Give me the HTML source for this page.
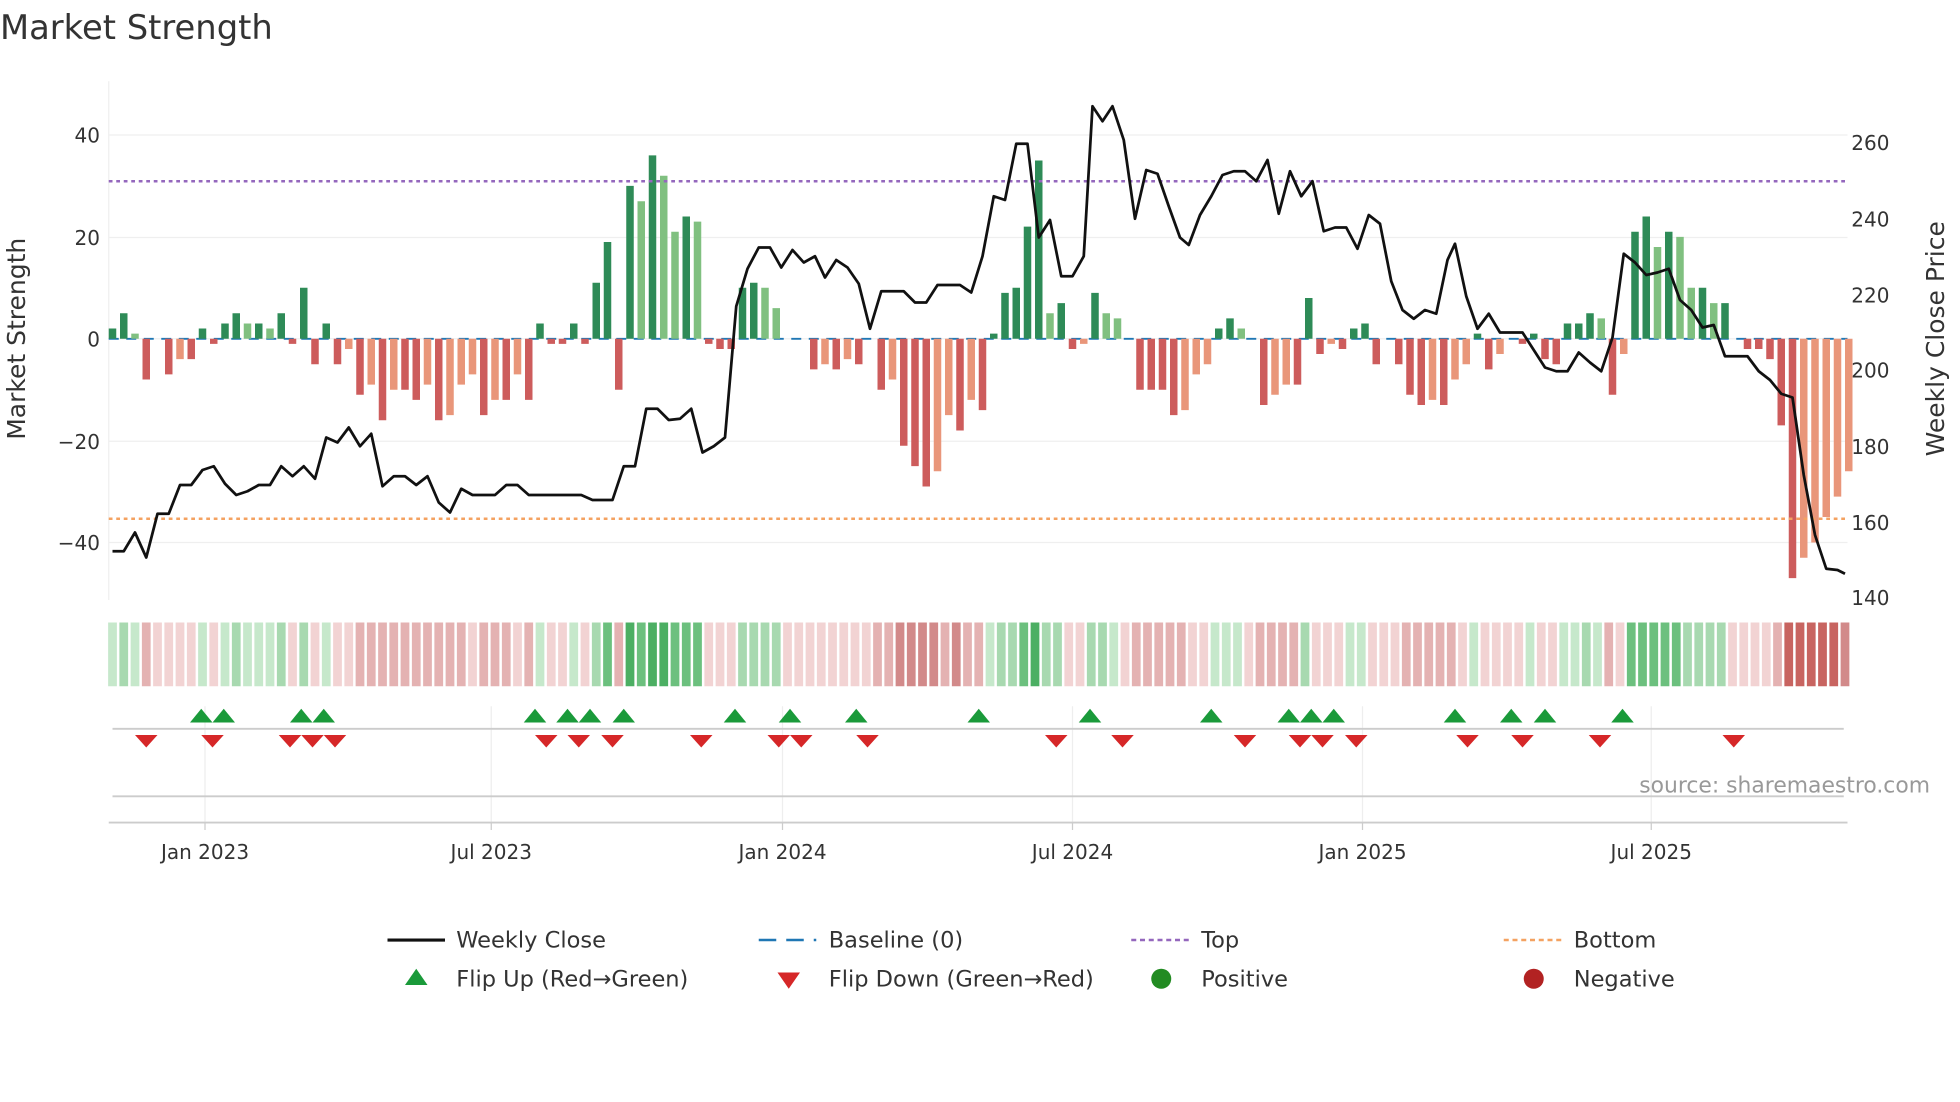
<!DOCTYPE html>
<html><head><meta charset="utf-8"><style>
html,body{margin:0;padding:0;background:#fff;}
svg{display:block;font-family:"DejaVu Sans","Liberation Sans",sans-serif;}
.a{fill:#2e8b57}.b{fill:#80c080}.c{fill:#cd5c5c}.d{fill:#e9967a}
.A{fill:#4caf63}.B{fill:#6cc07e}.C{fill:#a8d9b0}.D{fill:#c6e8cb}.E{fill:#f2d3d3}.F{fill:#e4b2b2}.G{fill:#d28a8a}.H{fill:#c86460}
.u{fill:#1a9a3a}.n{fill:#d62728}
</style></head><body>
<svg width="1960" height="1102" viewBox="0 0 1568 881.6" xmlns="http://www.w3.org/2000/svg">
<rect width="1568" height="882" fill="#fff"/>
<text x="0" y="31" font-size="27" fill="#333">Market Strength</text>
<g stroke="#efefef" stroke-width="1">
<line x1="87" x2="1478" y1="108" y2="108"/><line x1="87" x2="1478" y1="190" y2="190"/>
<line x1="87" x2="1478" y1="271" y2="271"/><line x1="87" x2="1478" y1="353" y2="353"/>
<line x1="87" x2="1478" y1="434" y2="434"/>
<line x1="87" x2="87" y1="65" y2="480"/>
</g>
<g font-size="16" fill="#333" text-anchor="end">
<text x="80" y="114">40</text><text x="80" y="196">20</text><text x="80" y="277">0</text>
<text x="80" y="359">−20</text><text x="80" y="440">−40</text>
</g>
<g font-size="16" fill="#333">
<text x="1481" y="120">260</text><text x="1481" y="181">240</text><text x="1481" y="242">220</text>
<text x="1481" y="302">200</text><text x="1481" y="363">180</text><text x="1481" y="424">160</text>
<text x="1481" y="484">140</text>
</g>
<text transform="translate(20,271) rotate(-90)" text-anchor="middle" font-size="20" fill="#333">Market Strength</text>
<text transform="translate(1555,271) rotate(-90)" text-anchor="middle" font-size="20" fill="#333">Weekly Close Price</text>
<line x1="87" x2="1478" y1="271" y2="271" stroke="#1f77b4" stroke-width="1.5" stroke-dasharray="8,6"/>
<g>
<rect x="87" y="262.8" width="6" height="8.2" class="a"/>
<rect x="96" y="250.6" width="6" height="20.4" class="a"/>
<rect x="105" y="266.9" width="6" height="4.1" class="b"/>
<rect x="114" y="271" width="6" height="32.6" class="c"/>
<rect x="132" y="271" width="6" height="28.5" class="c"/>
<rect x="141" y="271" width="6" height="16.3" class="d"/>
<rect x="150" y="271" width="6" height="16.3" class="c"/>
<rect x="159" y="262.8" width="6" height="8.2" class="a"/>
<rect x="168" y="271" width="6" height="4.1" class="c"/>
<rect x="177" y="258.8" width="6" height="12.2" class="a"/>
<rect x="186" y="250.6" width="6" height="20.4" class="a"/>
<rect x="195" y="258.8" width="6" height="12.2" class="b"/>
<rect x="204" y="258.8" width="6" height="12.2" class="a"/>
<rect x="213" y="262.8" width="6" height="8.2" class="b"/>
<rect x="222" y="250.6" width="6" height="20.4" class="a"/>
<rect x="231" y="271" width="6" height="4.1" class="c"/>
<rect x="240" y="230.2" width="6" height="40.8" class="a"/>
<rect x="249" y="271" width="6" height="20.4" class="c"/>
<rect x="258" y="258.8" width="6" height="12.2" class="a"/>
<rect x="267" y="271" width="6" height="20.4" class="c"/>
<rect x="276" y="271" width="6" height="8.2" class="d"/>
<rect x="285" y="271" width="6" height="44.8" class="c"/>
<rect x="294" y="271" width="6" height="36.7" class="d"/>
<rect x="303" y="271" width="6" height="65.2" class="c"/>
<rect x="312" y="271" width="6" height="40.8" class="d"/>
<rect x="321" y="271" width="6" height="40.8" class="c"/>
<rect x="330" y="271" width="6" height="48.9" class="c"/>
<rect x="339" y="271" width="6" height="36.7" class="d"/>
<rect x="348" y="271" width="6" height="65.2" class="c"/>
<rect x="357" y="271" width="6" height="61.1" class="d"/>
<rect x="366" y="271" width="6" height="36.7" class="d"/>
<rect x="375" y="271" width="6" height="28.5" class="d"/>
<rect x="384" y="271" width="6" height="61.1" class="c"/>
<rect x="393" y="271" width="6" height="48.9" class="d"/>
<rect x="402" y="271" width="6" height="48.9" class="c"/>
<rect x="411" y="271" width="6" height="28.5" class="d"/>
<rect x="420" y="271" width="6" height="48.9" class="c"/>
<rect x="429" y="258.8" width="6" height="12.2" class="a"/>
<rect x="438" y="271" width="6" height="4.1" class="c"/>
<rect x="447" y="271" width="6" height="4.1" class="c"/>
<rect x="456" y="258.8" width="6" height="12.2" class="a"/>
<rect x="465" y="271" width="6" height="4.1" class="c"/>
<rect x="474" y="226.2" width="6" height="44.8" class="a"/>
<rect x="483" y="193.6" width="6" height="77.4" class="a"/>
<rect x="492" y="271" width="6" height="40.8" class="c"/>
<rect x="501" y="148.7" width="6" height="122.3" class="a"/>
<rect x="510" y="161" width="6" height="110" class="b"/>
<rect x="519" y="124.3" width="6" height="146.7" class="a"/>
<rect x="528" y="140.6" width="6" height="130.4" class="b"/>
<rect x="537" y="185.4" width="6" height="85.6" class="b"/>
<rect x="546" y="173.2" width="6" height="97.8" class="a"/>
<rect x="555" y="177.3" width="6" height="93.7" class="b"/>
<rect x="564" y="271" width="6" height="4.1" class="c"/>
<rect x="573" y="271" width="6" height="8.2" class="c"/>
<rect x="582" y="271" width="6" height="8.2" class="c"/>
<rect x="591" y="230.2" width="6" height="40.8" class="a"/>
<rect x="600" y="226.2" width="6" height="44.8" class="a"/>
<rect x="609" y="230.2" width="6" height="40.8" class="b"/>
<rect x="618" y="246.5" width="6" height="24.5" class="b"/>
<rect x="648" y="271" width="6" height="24.5" class="c"/>
<rect x="657" y="271" width="6" height="20.4" class="d"/>
<rect x="666" y="271" width="6" height="24.5" class="c"/>
<rect x="675" y="271" width="6" height="16.3" class="d"/>
<rect x="684" y="271" width="6" height="20.4" class="c"/>
<rect x="702" y="271" width="6" height="40.8" class="c"/>
<rect x="711" y="271" width="6" height="32.6" class="d"/>
<rect x="720" y="271" width="6" height="85.6" class="c"/>
<rect x="729" y="271" width="6" height="101.9" class="c"/>
<rect x="738" y="271" width="6" height="118.2" class="c"/>
<rect x="747" y="271" width="6" height="106" class="d"/>
<rect x="756" y="271" width="6" height="61.1" class="d"/>
<rect x="765" y="271" width="6" height="73.4" class="c"/>
<rect x="774" y="271" width="6" height="48.9" class="d"/>
<rect x="783" y="271" width="6" height="57.1" class="c"/>
<rect x="792" y="266.9" width="6" height="4.1" class="a"/>
<rect x="801" y="234.3" width="6" height="36.7" class="a"/>
<rect x="810" y="230.2" width="6" height="40.8" class="a"/>
<rect x="819" y="181.3" width="6" height="89.7" class="a"/>
<rect x="828" y="128.4" width="6" height="142.6" class="a"/>
<rect x="837" y="250.6" width="6" height="20.4" class="b"/>
<rect x="846" y="242.5" width="6" height="28.5" class="a"/>
<rect x="855" y="271" width="6" height="8.2" class="c"/>
<rect x="864" y="271" width="6" height="4.1" class="d"/>
<rect x="873" y="234.3" width="6" height="36.7" class="a"/>
<rect x="882" y="250.6" width="6" height="20.4" class="b"/>
<rect x="891" y="254.7" width="6" height="16.3" class="b"/>
<rect x="909" y="271" width="6" height="40.8" class="c"/>
<rect x="918" y="271" width="6" height="40.8" class="c"/>
<rect x="927" y="271" width="6" height="40.8" class="c"/>
<rect x="936" y="271" width="6" height="61.1" class="c"/>
<rect x="945" y="271" width="6" height="57.1" class="d"/>
<rect x="954" y="271" width="6" height="28.5" class="d"/>
<rect x="963" y="271" width="6" height="20.4" class="d"/>
<rect x="972" y="262.8" width="6" height="8.2" class="a"/>
<rect x="981" y="254.7" width="6" height="16.3" class="a"/>
<rect x="990" y="262.8" width="6" height="8.2" class="b"/>
<rect x="1008" y="271" width="6" height="53" class="c"/>
<rect x="1017" y="271" width="6" height="44.8" class="d"/>
<rect x="1026" y="271" width="6" height="36.7" class="d"/>
<rect x="1035" y="271" width="6" height="36.7" class="c"/>
<rect x="1044" y="238.4" width="6" height="32.6" class="a"/>
<rect x="1053" y="271" width="6" height="12.2" class="c"/>
<rect x="1062" y="271" width="6" height="4.1" class="d"/>
<rect x="1071" y="271" width="6" height="8.2" class="c"/>
<rect x="1080" y="262.8" width="6" height="8.2" class="a"/>
<rect x="1089" y="258.8" width="6" height="12.2" class="a"/>
<rect x="1098" y="271" width="6" height="20.4" class="c"/>
<rect x="1116" y="271" width="6" height="20.4" class="c"/>
<rect x="1125" y="271" width="6" height="44.8" class="c"/>
<rect x="1134" y="271" width="6" height="53" class="c"/>
<rect x="1143" y="271" width="6" height="48.9" class="d"/>
<rect x="1152" y="271" width="6" height="53" class="c"/>
<rect x="1161" y="271" width="6" height="32.6" class="d"/>
<rect x="1170" y="271" width="6" height="20.4" class="d"/>
<rect x="1179" y="266.9" width="6" height="4.1" class="a"/>
<rect x="1188" y="271" width="6" height="24.5" class="c"/>
<rect x="1197" y="271" width="6" height="12.2" class="d"/>
<rect x="1215" y="271" width="6" height="4.1" class="c"/>
<rect x="1224" y="266.9" width="6" height="4.1" class="a"/>
<rect x="1233" y="271" width="6" height="16.3" class="c"/>
<rect x="1242" y="271" width="6" height="20.4" class="c"/>
<rect x="1251" y="258.8" width="6" height="12.2" class="a"/>
<rect x="1260" y="258.8" width="6" height="12.2" class="a"/>
<rect x="1269" y="250.6" width="6" height="20.4" class="a"/>
<rect x="1278" y="254.7" width="6" height="16.3" class="b"/>
<rect x="1287" y="271" width="6" height="44.8" class="c"/>
<rect x="1296" y="271" width="6" height="12.2" class="d"/>
<rect x="1305" y="185.4" width="6" height="85.6" class="a"/>
<rect x="1314" y="173.2" width="6" height="97.8" class="a"/>
<rect x="1323" y="197.6" width="6" height="73.4" class="b"/>
<rect x="1332" y="185.4" width="6" height="85.6" class="a"/>
<rect x="1341" y="189.5" width="6" height="81.5" class="b"/>
<rect x="1350" y="230.2" width="6" height="40.8" class="b"/>
<rect x="1359" y="230.2" width="6" height="40.8" class="a"/>
<rect x="1368" y="242.5" width="6" height="28.5" class="b"/>
<rect x="1377" y="242.5" width="6" height="28.5" class="a"/>
<rect x="1395" y="271" width="6" height="8.2" class="c"/>
<rect x="1404" y="271" width="6" height="8.2" class="c"/>
<rect x="1413" y="271" width="6" height="16.3" class="c"/>
<rect x="1422" y="271" width="6" height="69.3" class="c"/>
<rect x="1431" y="271" width="6" height="191.5" class="c"/>
<rect x="1440" y="271" width="6" height="175.2" class="d"/>
<rect x="1449" y="271" width="6" height="163" class="d"/>
<rect x="1458" y="271" width="6" height="142.6" class="d"/>
<rect x="1467" y="271" width="6" height="126.3" class="d"/>
<rect x="1476" y="271" width="6" height="106" class="d"/>
</g>
<line x1="87" x2="1478" y1="145" y2="145" stroke="#9467bd" stroke-width="2" stroke-dasharray="3,3"/>
<line x1="87" x2="1478" y1="415" y2="415" stroke="#f4a261" stroke-width="2" stroke-dasharray="3,3"/>
<polyline fill="none" stroke="#111" stroke-width="2.2" stroke-linejoin="round" points="90,441 99,441 108,426 117,446 126,411 135,411 144,388 153,388 162,376 171,373 180,387 189,396 198,393 207,388 216,388 225,373 234,381 243,373 252,383 261,350 270,354 279,342 288,357 297,347 306,389 315,381 324,381 333,388 342,381 351,402 360,410 369,391 378,396 396,396 405,388 414,388 423,396 465,396 474,400 490,400 499,373 508,373 517,327 526,327 535,336 544,335 553,327 562,362 571,357 580,350 589,245 598,215 607,198 616,198 625,214 634,200 643,210 652,205 660,222 669,208 678,214 687,227 696,263 705,233 723,233 732,242 741,242 750,228 768,228 777,234 786,205 795,157 804,160 813,115 822,115 831,190 840,176 849,221 858,221 867,205 874,85 882,97 890,85 899,112 908,175 917,136 926,139 935,165 944,190 951,196 960,172 969,157 978,140 987,137 996,137 1005,145 1014,128 1023,171 1032,137 1041,157 1050,145 1059,185 1068,182 1077,182 1086,199 1095,172 1104,179 1113,225 1122,248 1131,255 1140,248 1149,251 1158,208 1164,195 1173,237 1182,263 1191,251 1200,266 1218,266 1227,280 1236,294 1245,297 1254,297 1263,282 1272,290 1281,297 1290,270 1299,203 1308,210 1317,220 1326,218 1335,215 1344,240 1353,248 1362,262 1371,260 1380,285 1398,285 1407,297 1416,304 1425,315 1434,318 1443,380 1452,428 1461,455 1470,456 1476,459"/>
<g transform="translate(-0.5,0)">
<rect x="87" y="498" width="7" height="51" class="D"/><rect x="96" y="498" width="7" height="51" class="C"/><rect x="105" y="498" width="7" height="51" class="D"/><rect x="114" y="498" width="7" height="51" class="F"/><rect x="123" y="498" width="7" height="51" class="E"/><rect x="132" y="498" width="7" height="51" class="E"/><rect x="141" y="498" width="7" height="51" class="E"/><rect x="150" y="498" width="7" height="51" class="E"/><rect x="159" y="498" width="7" height="51" class="D"/><rect x="168" y="498" width="7" height="51" class="E"/>
<rect x="177" y="498" width="7" height="51" class="D"/><rect x="186" y="498" width="7" height="51" class="C"/><rect x="195" y="498" width="7" height="51" class="D"/><rect x="204" y="498" width="7" height="51" class="D"/><rect x="213" y="498" width="7" height="51" class="D"/><rect x="222" y="498" width="7" height="51" class="C"/><rect x="231" y="498" width="7" height="51" class="E"/><rect x="240" y="498" width="7" height="51" class="C"/><rect x="249" y="498" width="7" height="51" class="E"/><rect x="258" y="498" width="7" height="51" class="D"/>
<rect x="267" y="498" width="7" height="51" class="E"/><rect x="276" y="498" width="7" height="51" class="E"/><rect x="285" y="498" width="7" height="51" class="F"/><rect x="294" y="498" width="7" height="51" class="F"/><rect x="303" y="498" width="7" height="51" class="F"/><rect x="312" y="498" width="7" height="51" class="F"/><rect x="321" y="498" width="7" height="51" class="F"/><rect x="330" y="498" width="7" height="51" class="F"/><rect x="339" y="498" width="7" height="51" class="F"/><rect x="348" y="498" width="7" height="51" class="F"/>
<rect x="357" y="498" width="7" height="51" class="F"/><rect x="366" y="498" width="7" height="51" class="F"/><rect x="375" y="498" width="7" height="51" class="E"/><rect x="384" y="498" width="7" height="51" class="F"/><rect x="393" y="498" width="7" height="51" class="F"/><rect x="402" y="498" width="7" height="51" class="F"/><rect x="411" y="498" width="7" height="51" class="E"/><rect x="420" y="498" width="7" height="51" class="F"/><rect x="429" y="498" width="7" height="51" class="D"/><rect x="438" y="498" width="7" height="51" class="E"/>
<rect x="447" y="498" width="7" height="51" class="E"/><rect x="456" y="498" width="7" height="51" class="D"/><rect x="465" y="498" width="7" height="51" class="E"/><rect x="474" y="498" width="7" height="51" class="C"/><rect x="483" y="498" width="7" height="51" class="B"/><rect x="492" y="498" width="7" height="51" class="F"/><rect x="501" y="498" width="7" height="51" class="A"/><rect x="510" y="498" width="7" height="51" class="B"/><rect x="519" y="498" width="7" height="51" class="A"/><rect x="528" y="498" width="7" height="51" class="A"/>
<rect x="537" y="498" width="7" height="51" class="B"/><rect x="546" y="498" width="7" height="51" class="B"/><rect x="555" y="498" width="7" height="51" class="B"/><rect x="564" y="498" width="7" height="51" class="E"/><rect x="573" y="498" width="7" height="51" class="E"/><rect x="582" y="498" width="7" height="51" class="E"/><rect x="591" y="498" width="7" height="51" class="C"/><rect x="600" y="498" width="7" height="51" class="C"/><rect x="609" y="498" width="7" height="51" class="C"/><rect x="618" y="498" width="7" height="51" class="C"/>
<rect x="627" y="498" width="7" height="51" class="E"/><rect x="636" y="498" width="7" height="51" class="E"/><rect x="645" y="498" width="7" height="51" class="E"/><rect x="654" y="498" width="7" height="51" class="E"/><rect x="663" y="498" width="7" height="51" class="E"/><rect x="672" y="498" width="7" height="51" class="E"/><rect x="681" y="498" width="7" height="51" class="E"/><rect x="690" y="498" width="7" height="51" class="E"/><rect x="699" y="498" width="7" height="51" class="F"/><rect x="708" y="498" width="7" height="51" class="F"/>
<rect x="717" y="498" width="7" height="51" class="G"/><rect x="726" y="498" width="7" height="51" class="G"/><rect x="735" y="498" width="7" height="51" class="G"/><rect x="744" y="498" width="7" height="51" class="G"/><rect x="753" y="498" width="7" height="51" class="F"/><rect x="762" y="498" width="7" height="51" class="G"/><rect x="771" y="498" width="7" height="51" class="F"/><rect x="780" y="498" width="7" height="51" class="F"/><rect x="789" y="498" width="7" height="51" class="D"/><rect x="798" y="498" width="7" height="51" class="C"/>
<rect x="807" y="498" width="7" height="51" class="C"/><rect x="816" y="498" width="7" height="51" class="B"/><rect x="825" y="498" width="7" height="51" class="A"/><rect x="834" y="498" width="7" height="51" class="C"/><rect x="843" y="498" width="7" height="51" class="C"/><rect x="852" y="498" width="7" height="51" class="E"/><rect x="861" y="498" width="7" height="51" class="E"/><rect x="870" y="498" width="7" height="51" class="C"/><rect x="879" y="498" width="7" height="51" class="C"/><rect x="888" y="498" width="7" height="51" class="D"/>
<rect x="897" y="498" width="7" height="51" class="E"/><rect x="906" y="498" width="7" height="51" class="F"/><rect x="915" y="498" width="7" height="51" class="F"/><rect x="924" y="498" width="7" height="51" class="F"/><rect x="933" y="498" width="7" height="51" class="F"/><rect x="942" y="498" width="7" height="51" class="F"/><rect x="951" y="498" width="7" height="51" class="E"/><rect x="960" y="498" width="7" height="51" class="E"/><rect x="969" y="498" width="7" height="51" class="D"/><rect x="978" y="498" width="7" height="51" class="D"/>
<rect x="987" y="498" width="7" height="51" class="D"/><rect x="996" y="498" width="7" height="51" class="E"/><rect x="1005" y="498" width="7" height="51" class="F"/><rect x="1014" y="498" width="7" height="51" class="F"/><rect x="1023" y="498" width="7" height="51" class="F"/><rect x="1032" y="498" width="7" height="51" class="F"/><rect x="1041" y="498" width="7" height="51" class="C"/><rect x="1050" y="498" width="7" height="51" class="E"/><rect x="1059" y="498" width="7" height="51" class="E"/><rect x="1068" y="498" width="7" height="51" class="E"/>
<rect x="1077" y="498" width="7" height="51" class="D"/><rect x="1086" y="498" width="7" height="51" class="D"/><rect x="1095" y="498" width="7" height="51" class="E"/><rect x="1104" y="498" width="7" height="51" class="E"/><rect x="1113" y="498" width="7" height="51" class="E"/><rect x="1122" y="498" width="7" height="51" class="F"/><rect x="1131" y="498" width="7" height="51" class="F"/><rect x="1140" y="498" width="7" height="51" class="F"/><rect x="1149" y="498" width="7" height="51" class="F"/><rect x="1158" y="498" width="7" height="51" class="F"/>
<rect x="1167" y="498" width="7" height="51" class="E"/><rect x="1176" y="498" width="7" height="51" class="D"/><rect x="1185" y="498" width="7" height="51" class="E"/><rect x="1194" y="498" width="7" height="51" class="E"/><rect x="1203" y="498" width="7" height="51" class="E"/><rect x="1212" y="498" width="7" height="51" class="E"/><rect x="1221" y="498" width="7" height="51" class="D"/><rect x="1230" y="498" width="7" height="51" class="E"/><rect x="1239" y="498" width="7" height="51" class="E"/><rect x="1248" y="498" width="7" height="51" class="D"/>
<rect x="1257" y="498" width="7" height="51" class="D"/><rect x="1266" y="498" width="7" height="51" class="C"/><rect x="1275" y="498" width="7" height="51" class="D"/><rect x="1284" y="498" width="7" height="51" class="F"/><rect x="1293" y="498" width="7" height="51" class="E"/><rect x="1302" y="498" width="7" height="51" class="B"/><rect x="1311" y="498" width="7" height="51" class="B"/><rect x="1320" y="498" width="7" height="51" class="B"/><rect x="1329" y="498" width="7" height="51" class="B"/><rect x="1338" y="498" width="7" height="51" class="B"/>
<rect x="1347" y="498" width="7" height="51" class="C"/><rect x="1356" y="498" width="7" height="51" class="C"/><rect x="1365" y="498" width="7" height="51" class="C"/><rect x="1374" y="498" width="7" height="51" class="C"/><rect x="1383" y="498" width="7" height="51" class="E"/><rect x="1392" y="498" width="7" height="51" class="E"/><rect x="1401" y="498" width="7" height="51" class="E"/><rect x="1410" y="498" width="7" height="51" class="E"/><rect x="1419" y="498" width="7" height="51" class="F"/><rect x="1428" y="498" width="7" height="51" class="H"/>
<rect x="1437" y="498" width="7" height="51" class="H"/><rect x="1446" y="498" width="7" height="51" class="H"/><rect x="1455" y="498" width="7" height="51" class="H"/><rect x="1464" y="498" width="7" height="51" class="H"/><rect x="1473" y="498" width="7" height="51" class="G"/>
</g>
<g stroke="#eee"><line x1="164" x2="164" y1="565" y2="658"/><line x1="393" x2="393" y1="565" y2="658"/><line x1="626" x2="626" y1="565" y2="658"/><line x1="858" x2="858" y1="565" y2="658"/><line x1="1090" x2="1090" y1="565" y2="658"/><line x1="1321" x2="1321" y1="565" y2="658"/></g>
<line x1="90" x2="1475" y1="583" y2="583" stroke="#ccc" stroke-width="1.5"/>
<line x1="90" x2="1475" y1="637" y2="637" stroke="#ccc" stroke-width="1.5"/>
<line x1="87" x2="1478" y1="658" y2="658" stroke="#ccc" stroke-width="1.5"/>
<g class="u">
<polygon points="161,567 152,578 170,578"/><polygon points="179,567 170,578 188,578"/><polygon points="241,567 232,578 250,578"/><polygon points="259,567 250,578 268,578"/><polygon points="428,567 419,578 437,578"/><polygon points="454,567 445,578 463,578"/><polygon points="472,567 463,578 481,578"/><polygon points="499,567 490,578 508,578"/><polygon points="588,567 579,578 597,578"/><polygon points="632,567 623,578 641,578"/><polygon points="685,567 676,578 694,578"/><polygon points="783,567 774,578 792,578"/><polygon points="872,567 863,578 881,578"/><polygon points="969,567 960,578 978,578"/><polygon points="1031,567 1022,578 1040,578"/><polygon points="1049,567 1040,578 1058,578"/><polygon points="1067,567 1058,578 1076,578"/><polygon points="1164,567 1155,578 1173,578"/><polygon points="1209,567 1200,578 1218,578"/><polygon points="1236,567 1227,578 1245,578"/><polygon points="1298,567 1289,578 1307,578"/>
</g>
<g class="n">
<polygon points="108,588 126,588 117,598"/><polygon points="161,588 179,588 170,598"/><polygon points="223,588 241,588 232,598"/><polygon points="241,588 259,588 250,598"/><polygon points="259,588 277,588 268,598"/><polygon points="428,588 446,588 437,598"/><polygon points="454,588 472,588 463,598"/><polygon points="481,588 499,588 490,598"/><polygon points="552,588 570,588 561,598"/><polygon points="614,588 632,588 623,598"/><polygon points="632,588 650,588 641,598"/><polygon points="685,588 703,588 694,598"/><polygon points="836,588 854,588 845,598"/><polygon points="889,588 907,588 898,598"/><polygon points="987,588 1005,588 996,598"/><polygon points="1031,588 1049,588 1040,598"/><polygon points="1049,588 1067,588 1058,598"/><polygon points="1076,588 1094,588 1085,598"/><polygon points="1165,588 1183,588 1174,598"/><polygon points="1209,588 1227,588 1218,598"/><polygon points="1271,588 1289,588 1280,598"/><polygon points="1378,588 1396,588 1387,598"/>
</g>
<text x="1544" y="634" text-anchor="end" font-size="17.5" fill="#999">source: sharemaestro.com</text>
<g font-size="16" fill="#333" text-anchor="middle">
<text x="164" y="687">Jan 2023</text><text x="393" y="687">Jul 2023</text><text x="626" y="687">Jan 2024</text>
<text x="858" y="687">Jul 2024</text><text x="1090" y="687">Jan 2025</text><text x="1321" y="687">Jul 2025</text>
</g>
<g stroke="#ccc"><line x1="164" x2="164" y1="658" y2="664"/><line x1="393" x2="393" y1="658" y2="664"/><line x1="626" x2="626" y1="658" y2="664"/><line x1="858" x2="858" y1="658" y2="664"/><line x1="1090" x2="1090" y1="658" y2="664"/><line x1="1321" x2="1321" y1="658" y2="664"/></g>
<g font-size="18" fill="#333">
<line x1="310" x2="356" y1="752" y2="752" stroke="#111" stroke-width="2.5"/><text x="365" y="758">Weekly Close</text>
<line x1="607" x2="653" y1="752" y2="752" stroke="#1f77b4" stroke-width="2" stroke-dasharray="14,8"/><text x="663" y="758">Baseline (0)</text>
<line x1="905" x2="951" y1="752" y2="752" stroke="#9467bd" stroke-width="2" stroke-dasharray="4,3"/><text x="961" y="758">Top</text>
<line x1="1203" x2="1249" y1="752" y2="752" stroke="#f4a261" stroke-width="2" stroke-dasharray="4,3"/><text x="1259" y="758">Bottom</text>
<polygon points="333,775 324,788 342,788" fill="#1a9a3a"/><text x="365" y="789">Flip Up (Red→Green)</text>
<polygon points="622,778 640,778 631,791" fill="#d62728"/><text x="663" y="789">Flip Down (Green→Red)</text>
<circle cx="929" cy="783" r="8" fill="#228b22"/><text x="961" y="789">Positive</text>
<circle cx="1227" cy="783" r="8" fill="#b22222"/><text x="1259" y="789">Negative</text>
</g>
</svg>
</body></html>
